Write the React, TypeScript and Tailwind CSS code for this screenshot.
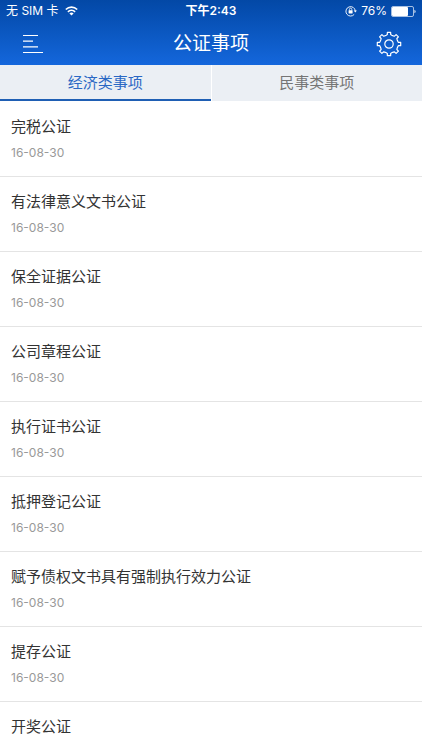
import { useState } from "react";

const tabs = ["经济类事项", "民事类事项"];

const items: { title: string; date?: string }[] = [
  { title: "完税公证", date: "16-08-30" },
  { title: "有法律意义文书公证", date: "16-08-30" },
  { title: "保全证据公证", date: "16-08-30" },
  { title: "公司章程公证", date: "16-08-30" },
  { title: "执行证书公证", date: "16-08-30" },
  { title: "抵押登记公证", date: "16-08-30" },
  { title: "赋予债权文书具有强制执行效力公证", date: "16-08-30" },
  { title: "提存公证", date: "16-08-30" },
  { title: "开奖公证" },
];

function WifiIcon() {
  return (
    <svg width="13" height="10" viewBox="0 0 13 10" fill="none" stroke="white" strokeWidth="1.7" aria-hidden="true">
      <path d="M0.8 3.5a8.2 8.2 0 0 1 11.4 0" />
      <path d="M2.9 5.8a5.2 5.2 0 0 1 7.2 0" />
      <path d="M6.5 9.6 4.4 7.5a3 3 0 0 1 4.2 0z" fill="white" stroke="none" />
    </svg>
  );
}

function RotationLockIcon() {
  return (
    <svg width="12" height="12" viewBox="0 0 12 12" fill="none" stroke="white" aria-hidden="true">
      <path d="M9.2 9.4A4.7 4.7 0 1 1 10.3 6" strokeWidth="0.9" />
      <path d="M8.7 5.6h3.2L10.3 7.6z" fill="white" stroke="none" />
      <rect x="3.6" y="5.3" width="4" height="3.2" rx="0.4" fill="white" stroke="none" />
      <path d="M4.4 5.5V4.4a1.2 1.2 0 0 1 2.4 0v1.1" strokeWidth="0.8" />
    </svg>
  );
}

function BatteryIcon() {
  return (
    <svg width="25" height="11" viewBox="0 0 25 11" aria-hidden="true">
      <rect x="0.5" y="0.5" width="22" height="10" rx="1.5" fill="none" stroke="white" strokeOpacity="0.65" />
      <rect x="1" y="1" width="16" height="9" rx="1" fill="white" />
      <path d="M23.5 3.8c1.4 0.5 1.4 2.9 0 3.4z" fill="white" />
    </svg>
  );
}

function MenuIcon() {
  return (
    <svg width="20" height="20" viewBox="0 0 20 20" stroke="white" strokeWidth="1.2" aria-hidden="true">
      <path d="M0 1.5h15M0 7.2h10M0 12.8h15M0 18.5h20" />
    </svg>
  );
}

const gearPath =
  Array.from({ length: 8 }, (_, tooth) =>
    [
      [-17, 9.2],
      [-10, 9.6],
      [-8, 11.8],
      [8, 11.8],
      [10, 9.6],
      [17, 9.2],
    ]
      .map(([offset, radius]) => {
        const angle = ((tooth * 45 + offset) * Math.PI) / 180;
        return `${(13 + radius * Math.sin(angle)).toFixed(2)} ${(13 - radius * Math.cos(angle)).toFixed(2)}`;
      })
      .join("L"),
  )
    .map((points, tooth) => (tooth === 0 ? "M" : "L") + points)
    .join("") + "Z";

function GearIcon() {
  return (
    <svg width="26" height="26" viewBox="0 0 26 26" fill="none" stroke="white" strokeWidth="1.2" strokeLinejoin="round" aria-hidden="true">
      <path d={gearPath} />
      <circle cx="13" cy="13" r="4.2" />
    </svg>
  );
}

export default function App() {
  const [active, setActive] = useState(0);

  return (
    <div className="h-screen overflow-hidden bg-white font-['Inter','Noto_Sans_CJK_SC',sans-serif]">
      <header className="bg-linear-to-b from-[#0348a6] to-[#1467dc] text-white">
        <div className="grid h-[22px] grid-cols-3 items-center px-[6px] text-xs">
          <div className="flex items-center gap-[6px]">
            <span>无 SIM 卡</span>
            <WifiIcon />
          </div>
          <div className="text-center font-semibold">下午2:43</div>
          <div className="flex items-center justify-end gap-1">
            <RotationLockIcon />
            <span>76%</span>
            <BatteryIcon />
          </div>
        </div>
        <div className="flex h-[43px] items-center justify-between px-5">
          <button type="button" aria-label="菜单" className="flex w-[26px] justify-center">
            <MenuIcon />
          </button>
          <h1 className="text-[19px] leading-7">公证事项</h1>
          <button type="button" aria-label="设置">
            <GearIcon />
          </button>
        </div>
      </header>

      <nav className="flex h-9 divide-x divide-white">
        {tabs.map((tab, index) => (
          <button
            key={tab}
            type="button"
            aria-pressed={active === index}
            onClick={() => setActive(index)}
            className={
              active === index
                ? "relative flex-1 bg-[#ebeff4] text-[15px] text-[#2a68c4] after:absolute after:inset-x-0 after:bottom-0 after:h-[2px] after:bg-[#1f5fb4]"
                : "relative flex-1 bg-[#ebeff4] text-[15px] text-[#757575]"
            }
          >
            {tab}
          </button>
        ))}
      </nav>

      <ul className="pt-px">
        {items.map((item) => (
          <li key={item.title} className="border-b border-[#e4e4e4] px-[11px] py-[13px]">
            <h2 className="text-[15px] leading-6 text-[#333333]">{item.title}</h2>
            {item.date && <p className="mt-1 text-xs leading-5 text-[#999999]">{item.date}</p>}
          </li>
        ))}
      </ul>
    </div>
  );
}
